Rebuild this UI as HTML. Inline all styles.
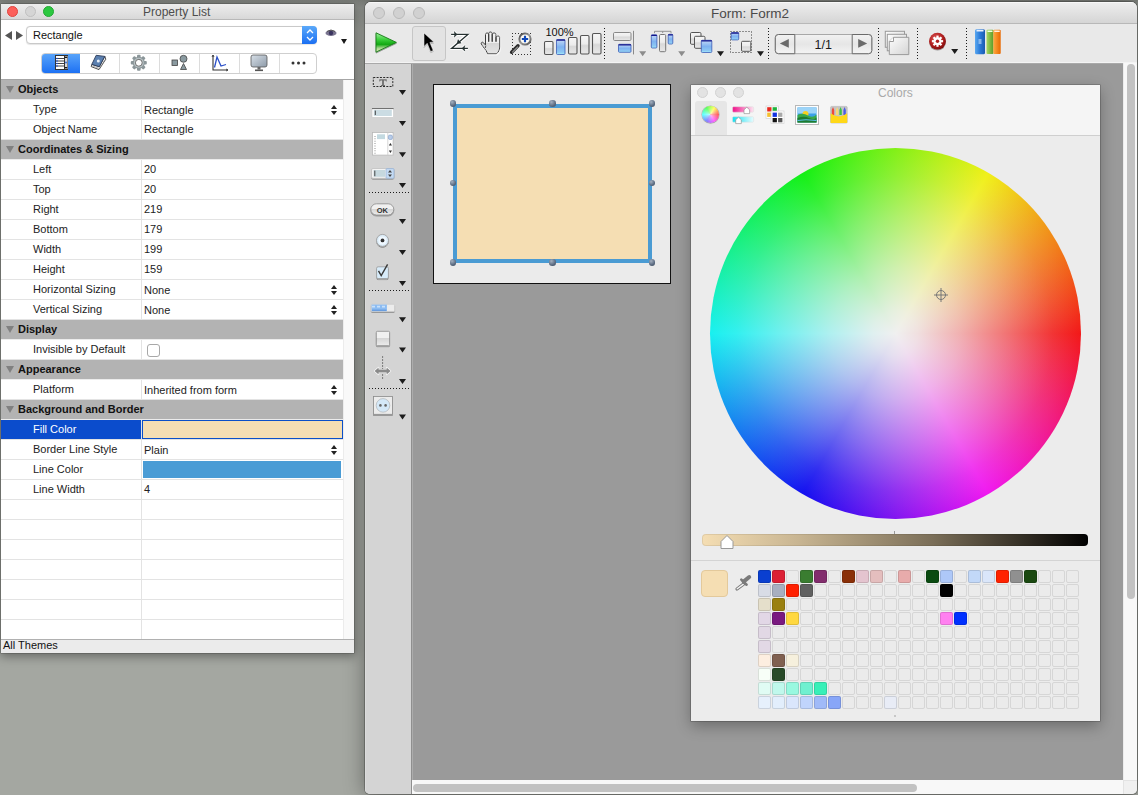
<!DOCTYPE html>
<html><head><meta charset="utf-8">
<style>
*{box-sizing:border-box;margin:0;padding:0}
html,body{width:1138px;height:795px;overflow:hidden}
body{position:relative;background:linear-gradient(#7e817c 0px,#959893 8px,#a4a7a1 30px);font-family:"Liberation Sans",sans-serif;color:#222}
.a{position:absolute}
svg{position:absolute;overflow:visible}
#pl{z-index:5;left:1px;top:4px;width:353px;height:649px;background:#fff;box-shadow:0 0 0 .5px rgba(0,0,0,.3),0 2px 10px 1px rgba(0,0,0,.4)}
.tl{position:absolute;width:12px;height:12px;border-radius:50%}
.ttl{position:absolute;font-size:12px;color:#4d4d4d;white-space:nowrap;line-height:14px}
.row{position:absolute;left:0;width:342px;height:20px;font-size:11px;color:#222}
.row .bl{position:absolute;left:0;top:19px;width:342px;height:1px;background:#e3e3e3}
.row .l{position:absolute;left:32px;top:3px;white-space:nowrap;line-height:13px}
.row .v{position:absolute;left:143px;top:3px;white-space:nowrap;line-height:13px}
.row .d{position:absolute;left:140px;top:0;width:1px;height:20px;background:#e3e3e3}
.row.sel{background:linear-gradient(#0b4ccc 0,#0b4ccc 19px,transparent 19px);color:#fff}
.hdr{position:absolute;left:0;width:342px;height:20px;background:#b3b3b3;border-bottom:1px solid #ececec;font-size:11px;font-weight:bold;color:#111}
.hdr .l{position:absolute;left:17px;top:3px;white-space:nowrap;line-height:13px}
.hdr .t{position:absolute;left:5px;top:6px;width:0;height:0;border-left:4.5px solid transparent;border-right:4.5px solid transparent;border-top:7px solid #808080}
.ud{right:6px;top:5px;width:6px;height:10px}
.seg{position:absolute;top:0;height:20px;width:40px;border-left:1px solid #dcdcdc}
.pt{position:absolute;width:0;height:0;border-left:3.5px solid transparent;border-right:3.5px solid transparent;border-top:5px solid #1a1a1a}
.dots{position:absolute;border-left:1px dotted #222}
.hdots{position:absolute;border-top:1px dotted #222}
.gc{position:absolute;width:13px;height:13px;border:1px solid #d6d6d6;border-radius:2px;background:#ebebeb}
.hd{position:absolute;width:6.4px;height:6.4px;border-radius:50%;background:radial-gradient(circle at 35% 30%,#a4b0c0,#5a6a80 60%,#3e4a5c)}
</style></head><body>

<!-- ============ Property List window ============ -->
<div id="pl" class="a">
  <div class="a" style="left:0;top:0;width:353px;height:16px;background:linear-gradient(#ededed,#d8d8d8);border-bottom:1px solid #b8b8b8"></div>
  <div class="tl" style="left:6px;top:2px;width:11px;height:11px;background:#fc605b;border:1px solid #e0443e"></div>
  <div class="tl" style="left:24px;top:2px;width:11px;height:11px;background:#d5d5d5;border:1px solid #c0c0c0"></div>
  <div class="tl" style="left:42px;top:2px;width:11px;height:11px;background:#2cc840;border:1px solid #22a834"></div>
  <div class="ttl" style="left:142px;top:1px">Property List</div>

  <!-- nav arrows -->
  <svg style="left:4px;top:27px" width="20" height="10"><path d="M0 4.5L7 0V9z" fill="#555"/><path d="M11 0L18 4.5L11 9z" fill="#555"/></svg>
  <!-- popup -->
  <div class="a" style="left:25px;top:22px;width:291px;height:18px;border:1px solid #c9c9c9;border-radius:4px;background:#fff;box-shadow:0 .5px 1px rgba(0,0,0,.1)"></div>
  <div class="a" style="left:32px;top:25px;font-size:11px;line-height:13px;color:#111">Rectangle</div>
  <div class="a" style="left:301px;top:22px;width:15px;height:18px;border-radius:0 4px 4px 0;background:linear-gradient(#5aa9fa,#1b6ff2)"></div>
  <svg style="left:305px;top:25px" width="8" height="12"><path d="M1 4L4 1L7 4M1 8L4 11L7 8" stroke="#fff" stroke-width="1.3" fill="none"/></svg>
  <!-- eye -->
  <svg style="left:324px;top:25px" width="22" height="16"><ellipse cx="6" cy="4" rx="5.5" ry="3" fill="#7a7590"/><ellipse cx="6" cy="4" rx="2.2" ry="2.2" fill="#3b3560"/><path d="M2 2.5Q6 -0.5 10 2.5" stroke="#555" fill="none"/></svg>
  <div class="pt" style="left:339.5px;top:35px"></div>

  <!-- segmented control -->
  <div class="a" style="left:40px;top:49px;width:276px;height:21px;border:1px solid #cfcfcf;border-radius:4px;background:#fff;overflow:hidden">
    <div class="a" style="left:-1px;top:-1px;width:39px;height:21px;background:linear-gradient(#5ba6fa,#1a6ef3)"></div>
    <div class="seg" style="left:76.5px"></div>
    <div class="seg" style="left:116.5px"></div>
    <div class="seg" style="left:156.5px"></div>
    <div class="seg" style="left:196.5px"></div>
    <div class="seg" style="left:236.5px"></div>
  </div>
  <!-- seg icons -->
  <svg style="left:53px;top:51px" width="16" height="16"><rect x="1.5" y="0.5" width="12" height="14" fill="#fff" stroke="#333"/><path d="M2 3.5H10M2 6H10M2 8.5H10M2 11H10" stroke="#444" stroke-width="1"/><rect x="10.5" y="1" width="3" height="13" fill="#d8d8d8"/><path d="M10.5 0.5V14.5" stroke="#333"/><path d="M12 1L13.5 3H10.5z M12 14L13.5 12H10.5z" fill="#111"/><circle cx="12" cy="7.5" r="1" fill="#3a6fd8"/><circle cx="3" cy="3.5" r=".8" fill="#1a4fd8"/><circle cx="3" cy="6" r=".8" fill="#1a4fd8"/><circle cx="3" cy="8.5" r=".8" fill="#1a4fd8"/><circle cx="3" cy="11" r=".8" fill="#1a4fd8"/></svg>
  <svg style="left:86px;top:48px" width="22" height="22"><path d="M4.8 12.4L4.2 14.6L12 17.6L18.8 7.2L17.8 4.4L12.3 14.7z" fill="#fff" stroke="#3a3a3a" stroke-width=".9" stroke-linejoin="round"/><path d="M5.6 14L12 16.2M13 15.5L18 7.6" stroke="#888" stroke-width=".6"/><path d="M9.2 3.3L17.8 4.4L12.3 14.7L4.8 12.4z" fill="#5b80b0" stroke="#2a3a58" stroke-width=".9" stroke-linejoin="round"/><circle cx="11.3" cy="9" r="1.5" fill="#e8f0fa"/></svg>
  <svg style="left:129.2px;top:50px" width="18" height="18"><g transform="translate(8.8 8.8)"><g fill="#8b9699"><rect x="-1.8" y="-8" width="3.6" height="16" rx="1"/><rect x="-1.8" y="-8" width="3.6" height="16" rx="1" transform="rotate(45)"/><rect x="-1.8" y="-8" width="3.6" height="16" rx="1" transform="rotate(90)"/><rect x="-1.8" y="-8" width="3.6" height="16" rx="1" transform="rotate(135)"/></g><circle r="6" fill="#8b9699"/><circle r="5" fill="#b8c2c4"/><circle r="3.4" fill="#fff" stroke="#555" stroke-width=".8"/></g></svg>
  <svg style="left:170px;top:50px" width="18" height="18"><rect x="1" y="6" width="5.5" height="5.5" fill="#8a9aa0" stroke="#444" stroke-width=".8"/><circle cx="12.5" cy="4.8" r="3.5" fill="#8a9aa0" stroke="#444" stroke-width=".8"/><path d="M9.5 15.5L12.5 9.5L15.5 15.5z" fill="#8a9aa0" stroke="#444" stroke-width=".8"/></svg>
  <svg style="left:210px;top:50px" width="18" height="18"><path d="M2 1V16H17" stroke="#333" stroke-width="1.1" fill="none"/><path d="M3.5 13.5L6 3L10 12L15 10.5" stroke="#2a4fc8" stroke-width="1.3" fill="none"/><path d="M1 3L2 1L3 3M15 15L17 16L15 17" stroke="#333" stroke-width=".8" fill="none"/></svg>
  <svg style="left:249px;top:50px" width="18" height="18"><rect x="1" y="1" width="16" height="12" rx="2" fill="url(#mon)" stroke="#555" stroke-width=".8"/><rect x="7.5" y="13" width="3" height="2.5" fill="#666"/><rect x="5" y="15.5" width="8" height="1.6" fill="#555"/><defs><linearGradient id="mon" x1="0" y1="0" x2="1" y2="1"><stop offset="0" stop-color="#d8e0e8"/><stop offset="1" stop-color="#8d9aa8"/></linearGradient></defs></svg>
  <svg style="left:289px;top:56px" width="18" height="6"><circle cx="3" cy="3" r="1.5" fill="#333"/><circle cx="8.5" cy="3" r="1.5" fill="#333"/><circle cx="14" cy="3" r="1.5" fill="#333"/></svg>

  <!-- list top line -->
  <div class="a" style="left:0;top:75px;width:353px;height:1px;background:#a6a6a6"></div>
  <!-- scroll gutter -->
  <div class="a" style="left:342px;top:76px;width:11px;height:559px;background:#f9f9f9;border-left:1px solid #ececec"></div>
<div class="hdr" style="top:76px"><div class="t"></div><div class="l">Objects</div></div>
<div class="row" style="top:96px"><div class="l">Type</div><div class="d"></div><div class="bl"></div><div class="v" style="top:4px">Rectangle</div><svg class="ud" viewBox="0 0 6 10"><path d="M3 0L6 4H0z M3 10L6 6H0z" fill="#222"/></svg></div>
<div class="row" style="top:116px"><div class="l">Object Name</div><div class="d"></div><div class="bl"></div><div class="v">Rectangle</div></div>
<div class="hdr" style="top:136px"><div class="t"></div><div class="l">Coordinates & Sizing</div></div>
<div class="row" style="top:156px"><div class="l">Left</div><div class="d"></div><div class="bl"></div><div class="v">20</div></div>
<div class="row" style="top:176px"><div class="l">Top</div><div class="d"></div><div class="bl"></div><div class="v">20</div></div>
<div class="row" style="top:196px"><div class="l">Right</div><div class="d"></div><div class="bl"></div><div class="v">219</div></div>
<div class="row" style="top:216px"><div class="l">Bottom</div><div class="d"></div><div class="bl"></div><div class="v">179</div></div>
<div class="row" style="top:236px"><div class="l">Width</div><div class="d"></div><div class="bl"></div><div class="v">199</div></div>
<div class="row" style="top:256px"><div class="l">Height</div><div class="d"></div><div class="bl"></div><div class="v">159</div></div>
<div class="row" style="top:276px"><div class="l">Horizontal Sizing</div><div class="d"></div><div class="bl"></div><div class="v" style="top:4px">None</div><svg class="ud" viewBox="0 0 6 10"><path d="M3 0L6 4H0z M3 10L6 6H0z" fill="#222"/></svg></div>
<div class="row" style="top:296px"><div class="l">Vertical Sizing</div><div class="d"></div><div class="bl"></div><div class="v" style="top:4px">None</div><svg class="ud" viewBox="0 0 6 10"><path d="M3 0L6 4H0z M3 10L6 6H0z" fill="#222"/></svg></div>
<div class="hdr" style="top:316px"><div class="t"></div><div class="l">Display</div></div>
<div class="row" style="top:336px"><div class="l">Invisible by Default</div><div class="d"></div><div class="bl"></div><div class="a" style="left:146px;top:4px;width:13px;height:13px;border:1px solid #a8a8a8;border-radius:3px;background:#fff"></div></div>
<div class="hdr" style="top:356px"><div class="t"></div><div class="l">Appearance</div></div>
<div class="row" style="top:376px"><div class="l">Platform</div><div class="d"></div><div class="bl"></div><div class="v" style="top:4px">Inherited from form</div><svg class="ud" viewBox="0 0 6 10"><path d="M3 0L6 4H0z M3 10L6 6H0z" fill="#222"/></svg></div>
<div class="hdr" style="top:396px"><div class="t"></div><div class="l">Background and Border</div></div>
<div class="row sel" style="top:416px"><div class="l">Fill Color</div><div class="d"></div><div class="bl"></div><div class="a" style="left:141px;top:0;width:201px;height:19px;border:1.5px solid #0b4fc8;background:#f5deb3"></div></div>
<div class="row" style="top:436px"><div class="l">Border Line Style</div><div class="d"></div><div class="bl"></div><div class="v" style="top:4px">Plain</div><svg class="ud" viewBox="0 0 6 10"><path d="M3 0L6 4H0z M3 10L6 6H0z" fill="#222"/></svg></div>
<div class="row" style="top:456px"><div class="l">Line Color</div><div class="d"></div><div class="bl"></div><div class="a" style="left:142px;top:1px;width:198px;height:17px;background:#4a9cd5"></div></div>
<div class="row" style="top:476px"><div class="l">Line Width</div><div class="d"></div><div class="bl"></div><div class="v">4</div></div>
<div class="row" style="top:496px"><div class="d"></div><div class="bl"></div></div>
<div class="row" style="top:516px"><div class="d"></div><div class="bl"></div></div>
<div class="row" style="top:536px"><div class="d"></div><div class="bl"></div></div>
<div class="row" style="top:556px"><div class="d"></div><div class="bl"></div></div>
<div class="row" style="top:576px"><div class="d"></div><div class="bl"></div></div>
<div class="row" style="top:596px"><div class="d"></div><div class="bl"></div></div>
<div class="row" style="top:616px"><div class="d"></div><div class="bl"></div></div>
  <!-- status bar -->
  <div class="a" style="left:0;top:635px;width:353px;height:14px;background:#ebebeb;border-top:1px solid #b0b0b0"></div>
  <div class="a" style="left:2px;top:635px;font-size:11px;line-height:13px;color:#111">All Themes</div>
</div>

<!-- ============ Form window ============ -->
<div class="a" style="left:365px;top:2px;width:772px;height:792px;background:#e9e9e9;border-radius:6px 6px 5px 5px;overflow:hidden;box-shadow:0 0 0 1px rgba(0,0,0,.22),0 0 20px 1px rgba(0,0,0,.36)">
  <!-- title bar -->
  <div class="a" style="left:0;top:0;width:773px;height:22px;background:linear-gradient(#eeeeee,#d5d5d5);border-bottom:1px solid #b8b8b8;box-shadow:inset 0 1px 0 #f8f8f8"></div>
  <div class="tl" style="left:8px;top:5px;background:#d1d1d1;border:1px solid #b9b9b9"></div>
  <div class="tl" style="left:28px;top:5px;background:#d1d1d1;border:1px solid #b9b9b9"></div>
  <div class="tl" style="left:48px;top:5px;background:#d1d1d1;border:1px solid #b9b9b9"></div>
  <div class="ttl" style="left:346px;top:4px;width:78px;text-align:center;font-size:13.5px;line-height:16px;color:#4a4a4a">Form: Form2</div>
  <!-- toolbar -->
  <div class="a" style="left:0;top:22px;width:773px;height:40px;background:#e9e9e9;border-bottom:1px solid #a9a9a9;box-shadow:inset 0 -1px 0 #f3f3f3"></div>
  <svg style="left:0;top:0" width="773" height="63"><defs>
<linearGradient id="gG" x1="0" y1="0" x2="0" y2="1"><stop offset="0" stop-color="#f6f6f6"/><stop offset=".45" stop-color="#ececec"/><stop offset=".55" stop-color="#d8d8d8"/><stop offset="1" stop-color="#e8e8e8"/></linearGradient>
<linearGradient id="gB" x1="0" y1="0" x2="0" y2="1"><stop offset="0" stop-color="#c4daf6"/><stop offset=".5" stop-color="#7fb2f0"/><stop offset=".85" stop-color="#8cc8f4"/><stop offset="1" stop-color="#a8f0fa"/></linearGradient>
<linearGradient id="gPlay" x1="0" y1="0" x2="0" y2="1"><stop offset="0" stop-color="#9ff09f"/><stop offset=".35" stop-color="#3ccf3c"/><stop offset=".6" stop-color="#12a812"/><stop offset=".8" stop-color="#a8d890"/><stop offset="1" stop-color="#f4f0c0"/></linearGradient>
<linearGradient id="gPage" x1="0" y1="0" x2="1" y2="1"><stop offset="0" stop-color="#fdfdfd"/><stop offset="1" stop-color="#d4d4d4"/></linearGradient>
<radialGradient id="gGear" cx=".4" cy=".35" r=".7"><stop offset="0" stop-color="#e25a5a"/><stop offset=".6" stop-color="#b02020"/><stop offset="1" stop-color="#7a0c0c"/></radialGradient>
<linearGradient id="gBlue" x1="0" y1="0" x2="1" y2="0"><stop offset="0" stop-color="#5aa8f0"/><stop offset=".5" stop-color="#2a7ad8"/><stop offset="1" stop-color="#1a5ab0"/></linearGradient>
<linearGradient id="gGreen" x1="0" y1="0" x2="1" y2="0"><stop offset="0" stop-color="#a8d860"/><stop offset="1" stop-color="#5a9a28"/></linearGradient>
<linearGradient id="gOr" x1="0" y1="0" x2="1" y2="0"><stop offset="0" stop-color="#ffaa40"/><stop offset="1" stop-color="#e86800"/></linearGradient>
<linearGradient id="gPC" x1="0" y1="0" x2="0" y2="1"><stop offset="0" stop-color="#f2f2f2"/><stop offset=".5" stop-color="#e6e6e6"/><stop offset="1" stop-color="#f4f4f4"/></linearGradient>
<linearGradient id="gPB" x1="0" y1="0" x2="0" y2="1"><stop offset="0" stop-color="#f0f0f0"/><stop offset=".5" stop-color="#f0f0f0"/><stop offset=".5" stop-color="#d6d6d6"/><stop offset="1" stop-color="#ececec"/></linearGradient>
<linearGradient id="gHand" x1="0" y1="0" x2="0" y2="1"><stop offset="0" stop-color="#f2f2f2"/><stop offset=".5" stop-color="#eeeeee"/><stop offset=".52" stop-color="#d6d6d6"/><stop offset="1" stop-color="#e4e4e4"/></linearGradient>
<linearGradient id="gRing" x1="0" y1="0" x2="1" y2="1"><stop offset="0" stop-color="#444"/><stop offset=".5" stop-color="#999"/><stop offset="1" stop-color="#555"/></linearGradient>
<filter id="sh" x="-20%" y="-20%" width="140%" height="140%"><feDropShadow dx="0" dy="1" stdDeviation=".4" flood-color="#000" flood-opacity=".35"/></filter>
<filter id="shw" x="-20%" y="-20%" width="140%" height="140%"><feDropShadow dx=".5" dy="1" stdDeviation=".3" flood-color="#fff" flood-opacity="1"/></filter>
</defs><path d="M11 30.8L31.4 40.4L11 50.1z" fill="url(#gPlay)" stroke="#157a15" stroke-width=".9" stroke-linejoin="round" filter="url(#sh)"/><rect x="47.5" y="24.5" width="33" height="34" rx="2.5" fill="#e3e3e3" stroke="#c6c6c6"/><path d="M59 31L59 44.5L62.2 41.3L65.6 49.6L68.2 48.6L64.9 40.4L68.8 40z" fill="#000" stroke="#fff" stroke-width=".5" filter="url(#sh)"/><path d="M86.1 32.4H102.9L86.6 46.4H102.9" stroke="#fff" stroke-width="3.4" stroke-linejoin="round" fill="none"/><path d="M92 32.4L89.2 29.6L89.9 32.4L89.2 35.2z M97.1 46.4L99.9 43.6L99.2 46.4L99.9 49.2z M92.1 41.6L93.1 37.6L94.4 39.6L96.2 41.1z" fill="#fff" stroke="#fff" stroke-width="2.2" stroke-linejoin="round"/><path d="M86.1 32.4H102.9L86.6 46.4H102.9" stroke="#253030" stroke-width="1.3" fill="none"/><path d="M92 32.4L89.2 29.6L89.9 32.4L89.2 35.2z M97.1 46.4L99.9 43.6L99.2 46.4L99.9 49.2z M92.1 41.6L93.1 37.6L94.4 39.6L96.2 41.1z" fill="#253030" stroke="#253030" stroke-width=".5"/><path d="M121 48.5C119 46 117 43.5 116.2 41.8C115.8 40.5 117.6 39.5 118.6 40.8L120.5 43V32.5C120.5 30.5 123.7 30.5 123.7 32.5V39.7V31.5C123.7 29.5 127.2 29.5 127.2 31.5V39.7V32.5C127.2 30.5 131 30.5 131 32.5V39.7V35.5C131 33.5 134.7 33.5 134.7 35.5V45C134.7 48 133.5 50 131.5 51.8H122.5C122 50.5 121.6 49.5 121 48.5z" fill="url(#gHand)" stroke="#3a3a3a" stroke-width="1" stroke-linejoin="round" filter="url(#shw)"/><path d="M120.8 43.5L120.3 46" stroke="#555" stroke-width="1"/><g fill="#333"><rect x="147" y="31" width="1" height="1"/><rect x="147" y="52" width="1" height="1"/><rect x="150" y="31" width="1" height="1"/><rect x="150" y="52" width="1" height="1"/><rect x="153" y="31" width="1" height="1"/><rect x="153" y="52" width="1" height="1"/><rect x="156" y="31" width="1" height="1"/><rect x="156" y="52" width="1" height="1"/><rect x="159" y="31" width="1" height="1"/><rect x="159" y="52" width="1" height="1"/><rect x="162" y="31" width="1" height="1"/><rect x="162" y="52" width="1" height="1"/><rect x="165" y="31" width="1" height="1"/><rect x="165" y="52" width="1" height="1"/><rect x="147" y="34" width="1" height="1"/><rect x="165" y="34" width="1" height="1"/><rect x="147" y="37" width="1" height="1"/><rect x="165" y="37" width="1" height="1"/><rect x="147" y="40" width="1" height="1"/><rect x="165" y="40" width="1" height="1"/><rect x="147" y="43" width="1" height="1"/><rect x="165" y="43" width="1" height="1"/><rect x="147" y="46" width="1" height="1"/><rect x="165" y="46" width="1" height="1"/><rect x="147" y="49" width="1" height="1"/><rect x="165" y="49" width="1" height="1"/></g><path d="M146.6 50.2L153 43.8" stroke="#2a2a2a" stroke-width="3.4" stroke-linecap="round"/><path d="M147.6 50L152.6 45" stroke="#8a8a8a" stroke-width="1.2" stroke-linecap="round"/><circle cx="160" cy="37" r="5.6" fill="#fffdf6" stroke="url(#gRing)" stroke-width="2"/><path d="M160 33.8V40.2M156.8 37H163.2" stroke="#1048b8" stroke-width="2.2"/><text x="180.5" y="34.2" font-family="Liberation Sans" font-size="11" fill="#111">100%</text><rect x="179.5" y="39.5" width="8.5" height="13" rx="1.2" fill="url(#gG)" stroke="#555" stroke-width="1.1"/><rect x="203.5" y="35.5" width="8.5" height="16.5" rx="1.2" fill="url(#gG)" stroke="#555" stroke-width="1.1"/><rect x="215.5" y="33.5" width="8.5" height="18.5" rx="1.2" fill="url(#gG)" stroke="#555" stroke-width="1.1"/><rect x="227.5" y="31.5" width="8.5" height="20.5" rx="1.2" fill="url(#gG)" stroke="#555" stroke-width="1.1"/><rect x="191.5" y="37.5" width="8.5" height="15" rx="1" fill="url(#gB)" stroke="#3a5ab8" stroke-width=".8"/><path d="M191.5 38.1H200.0" stroke="#14148a" stroke-width="1.3"/><path d="M239.5 26V57" stroke="#1a1a1a" stroke-width="1" stroke-dasharray="1 2"/><rect x="248.5" y="30.5" width="17.5" height="8" rx="1.2" fill="url(#gG)" stroke="#888" stroke-width="1"/><rect x="253.5" y="42.3" width="12.5" height="8" rx="1" fill="url(#gB)" stroke="#3a5ab8" stroke-width=".8"/><path d="M253.5 42.9H266.0" stroke="#14148a" stroke-width="1.3"/><path d="M268.5 28.8V52.4" stroke="#8a8a8a" stroke-width="1"/><path d="M274.2 49.2H281.2L277.7 54.2z" fill="#8c8c8c"/><path d="M289.5 31.2V29.3H306V31.2M297.7 29.3V31" stroke="#8a8a8a" stroke-width=".9" fill="none"/><rect x="286.3" y="32.8" width="5.6" height="13.2" rx="1" fill="url(#gB)" stroke="#3a5ab8" stroke-width=".8"/><path d="M286.3 33.4H291.90000000000003" stroke="#14148a" stroke-width="1.3"/><rect x="294.5" y="32.5" width="6.2" height="17.2" rx="1.2" fill="url(#gG)" stroke="#777" stroke-width="1"/><rect x="303.2" y="32.3" width="4.6" height="9.7" rx="1" fill="url(#gB)" stroke="#3a5ab8" stroke-width=".8"/><path d="M303.2 32.9H307.8" stroke="#14148a" stroke-width="1.3"/><path d="M313.2 49.2H320.2L316.7 54.2z" fill="#8c8c8c"/><rect x="325.5" y="30.5" width="10.5" height="11.8" rx="1.2" fill="url(#gG)" stroke="#555" stroke-width="1"/><rect x="329.5" y="34.3" width="10.5" height="12" rx="1.2" fill="url(#gG)" stroke="#555" stroke-width="1"/><rect x="336.3" y="38.3" width="10.5" height="12.2" rx="1" fill="url(#gB)" stroke="#3a5ab8" stroke-width=".8"/><path d="M336.3 38.9H346.8" stroke="#14148a" stroke-width="1.3"/><path d="M352 49.2H359L355.5 54.2z" fill="#1c1c1c"/><rect x="365.5" y="29.5" width="21" height="21" fill="none" stroke="#333" stroke-dasharray="1 2"/><rect x="366.2" y="30.5" width="7.5" height="7.4" rx="1" fill="url(#gB)" stroke="#3a5ab8" stroke-width=".8"/><path d="M366.2 31.1H373.7" stroke="#14148a" stroke-width="1.3"/><rect x="376.5" y="39.3" width="9.3" height="10" rx="1.2" fill="url(#gG)" stroke="#555" stroke-width="1"/><path d="M392 49.2H399L395.5 54.2z" fill="#1c1c1c"/><path d="M403.5 26V57" stroke="#1a1a1a" stroke-width="1" stroke-dasharray="1 2"/><rect x="410.3" y="32.5" width="96.5" height="19.2" rx="3.2" fill="url(#gPC)" stroke="#a8a8a8"/><path d="M429.8 32.5H413.5Q410.3 32.5 410.3 35.7V48.5Q410.3 51.7 413.5 51.7H429.8z" fill="url(#gPC)" stroke="#6a6a6a"/><path d="M487.2 32.5H503.5Q506.8 32.5 506.8 35.7V48.5Q506.8 51.7 503.5 51.7H487.2z" fill="url(#gPC)" stroke="#6a6a6a"/><path d="M414.8 41.4L423.8 37V45.8z" fill="#6a6a6a"/><path d="M493.2 37L502.2 41.4L493.2 45.8z" fill="#6a6a6a"/><text x="458.2" y="47.2" text-anchor="middle" font-family="Liberation Sans" font-size="12.5" fill="#1a1a1a">1/1</text><path d="M513.5 26V57" stroke="#1a1a1a" stroke-width="1" stroke-dasharray="1 2"/><rect x="520.3" y="29.3" width="19.2" height="16" fill="url(#gPage)" stroke="#9a9a9a"/><rect x="522.3" y="32.3" width="19.2" height="16.5" fill="url(#gPage)" stroke="#9a9a9a"/><path d="M528.5 35.3H543.8V52.6H524.3V39.5z" fill="url(#gPage)" stroke="#9a9a9a"/><path d="M524.3 39.5H528.5V35.3" fill="#fff" stroke="#9a9a9a"/><path d="M552.5 26V57" stroke="#1a1a1a" stroke-width="1" stroke-dasharray="1 2"/><g transform="translate(572.5 39.2)" filter="url(#sh)"><circle r="8.4" fill="url(#gGear)"/><g fill="#fff"><rect x="-1.1" y="-5.6" width="2.2" height="3" transform="rotate(0)"/><rect x="-1.1" y="-5.6" width="2.2" height="3" transform="rotate(45)"/><rect x="-1.1" y="-5.6" width="2.2" height="3" transform="rotate(90)"/><rect x="-1.1" y="-5.6" width="2.2" height="3" transform="rotate(135)"/><rect x="-1.1" y="-5.6" width="2.2" height="3" transform="rotate(180)"/><rect x="-1.1" y="-5.6" width="2.2" height="3" transform="rotate(225)"/><rect x="-1.1" y="-5.6" width="2.2" height="3" transform="rotate(270)"/><rect x="-1.1" y="-5.6" width="2.2" height="3" transform="rotate(315)"/><circle r="3.9"/></g><circle r="1.7" fill="#b02020"/></g><path d="M586.2 47H593.2L589.7 52z" fill="#1c1c1c"/><path d="M601.5 26V57" stroke="#1a1a1a" stroke-width="1" stroke-dasharray="1 2"/><rect x="610" y="27.2" width="10" height="25" rx="1.5" fill="url(#gBlue)"/><path d="M611.5 28.6H618.5" stroke="#e8f0ff" stroke-width="1.6"/><rect x="613.5" y="37" width="3" height="5" fill="#9cc4f0" opacity=".8"/><rect x="621.5" y="27.8" width="7" height="24.2" rx="1" fill="url(#gGreen)"/><path d="M622.5 29.2H627.5" stroke="#f0ffe0" stroke-width="1.6"/><rect x="628.3" y="27.8" width="7.4" height="24.2" rx="1" fill="url(#gOr)"/><path d="M629.3 29.2H634.7" stroke="#fff0e0" stroke-width="1.6"/></svg>
  <!-- palette -->
  <div class="a" style="left:0;top:62px;width:48px;height:731px;background:#d4d4d4;border-right:1px solid #acacac;box-shadow:inset -1px 0 0 #8f8f8f,inset 1px 0 0 #dcdcdc"></div>
  <svg style="left:0;top:0" width="50" height="430"><path d="M34 88H41L37.5 93z" fill="#1c1c1c"/><path d="M34 119H41L37.5 124z" fill="#1c1c1c"/><path d="M34 150.2H41L37.5 155.2z" fill="#1c1c1c"/><path d="M34 181H41L37.5 186z" fill="#1c1c1c"/><path d="M34 217H41L37.5 222z" fill="#1c1c1c"/><path d="M34 248H41L37.5 253z" fill="#1c1c1c"/><path d="M34 279H41L37.5 284z" fill="#1c1c1c"/><path d="M34 315.3H41L37.5 320.3z" fill="#1c1c1c"/><path d="M34 345.5H41L37.5 350.5z" fill="#1c1c1c"/><path d="M34 377.1H41L37.5 382.1z" fill="#1c1c1c"/><path d="M34 412.6H41L37.5 417.6z" fill="#1c1c1c"/><path d="M4 190.5H45" stroke="#1a1a1a" stroke-width="1" stroke-dasharray="1 2"/><path d="M4 288.5H45" stroke="#1a1a1a" stroke-width="1" stroke-dasharray="1 2"/><path d="M4 386.5H45" stroke="#1a1a1a" stroke-width="1" stroke-dasharray="1 2"/><rect x="8.3" y="75.5" width="19.5" height="9" fill="none" stroke="#2a2a2a" stroke-dasharray="2 1.3"/><path d="M14.3 77.3H21.7V79.6H21L20.4 78.4H18.9V83H20V84H16V83H17.1V78.4H15.6L15 79.6H14.3z" fill="#6e6e6e"/><rect x="7" y="106.2" width="21.6" height="9.2" fill="#fff" stroke="#c8c8c8" stroke-width=".6"/><path d="M7 106.6H28.6" stroke="#666" stroke-width="1"/><rect x="8.8" y="107.8" width="18" height="6.2" fill="#cbdce3"/><path d="M10.3 108.6V113" stroke="#333" stroke-width=".9"/><rect x="7.5" y="130.5" width="20.6" height="22.6" fill="#fff" stroke="#b8b8b8" stroke-width=".8"/><rect x="12" y="132.3" width="8" height="4.8" fill="#c3d9e0"/><path d="M22.8 130.5V153" stroke="#ccc" stroke-width=".8"/><rect x="23.4" y="133" width="4" height="4.5" rx="1.5" fill="#b8cce8" stroke="#7a98c8" stroke-width=".6"/><path d="M25.4 141L27 143.5H23.8z M25.4 151L27 148.5H23.8z" fill="#333"/><path d="M10 134V153" stroke="#555" stroke-width=".8" stroke-dasharray=".8 1.6"/><rect x="6.5" y="166.5" width="22.5" height="9.8" rx="1.5" fill="#f4f4f4" stroke="#bbb" stroke-width=".7" filter="url(#sh)"/><rect x="8.6" y="168" width="11.6" height="6.8" fill="#c6d8de"/><path d="M9.8 168.6V174.2" stroke="#333" stroke-width=".9"/><rect x="21" y="166.6" width="8" height="9.7" rx="1" fill="#c4daf2" stroke="#8aa8d0" stroke-width=".6"/><path d="M25 168L27 170.5H23z M25 175L27 172.5H23z" fill="#444"/><rect x="5.8" y="201.8" width="23" height="11.2" rx="5.6" fill="url(#gPB)" stroke="#8a8a8a" stroke-width=".8" filter="url(#sh)"/><text x="17.4" y="210.6" text-anchor="middle" font-family="Liberation Sans" font-weight="bold" font-size="7.5" fill="#333">OK</text><circle cx="17.5" cy="238.4" r="6" fill="#dcecf8" stroke="#999" stroke-width=".8" filter="url(#sh)"/><circle cx="17.5" cy="238.4" r="4" fill="#f0f8ff"/><circle cx="17.5" cy="238.4" r="1.9" fill="#333"/><rect x="11.6" y="264.8" width="11.8" height="11.8" rx="1.5" fill="#d8ecfa" stroke="#999" stroke-width=".8" filter="url(#sh)"/><path d="M13.5 268.8L16.2 273.6L22.6 262.4" stroke="#3a3a3a" stroke-width="1.4" fill="none"/><rect x="6.2" y="302.2" width="23.4" height="7.2" rx="1" fill="#ececec" stroke="#c8c8c8" stroke-width=".7" filter="url(#sh)"/><rect x="6.6" y="302.6" width="15.3" height="6.6" fill="#8cbcf2"/><path d="M7 304.6H21.5" stroke="#c8e0fa" stroke-width="1.6" stroke-dasharray="3 2"/><path d="M7 308.2H21.5" stroke="#5a90d8" stroke-width="1"/><rect x="11.3" y="329.3" width="13.3" height="14.4" rx="1" fill="url(#gPB)" stroke="#8a8a8a" stroke-width=".8" filter="url(#sh)"/><path d="M17.6 354.5V378.5" stroke="#222" stroke-dasharray="1 2"/><path d="M9.6 369L13.6 365.4V367.6H21.6V365.4L25.6 369L21.6 372.6V370.4H13.6V372.6z" fill="#8a8a8a" stroke="#fff" stroke-width="1.2" stroke-linejoin="round" paint-order="stroke"/><rect x="8.5" y="394.5" width="19" height="17.8" fill="#ececec" stroke="#8a8a8a" stroke-width=".8" filter="url(#sh)"/><circle cx="18" cy="403.4" r="6.8" fill="#d4e8f8" stroke="#aaa" stroke-width=".6"/><circle cx="15.4" cy="403.4" r="1.3" fill="#666"/><circle cx="20.6" cy="403.4" r="1.3" fill="#666"/></svg>
  <!-- canvas -->
  <div class="a" style="left:48px;top:62px;width:710px;height:716px;background:#9a9a9a"></div>
  <!-- form -->
  <div class="a" style="left:68px;top:82px;width:238px;height:200px;background:#ebebeb;border:1px solid #111"></div>
  <div class="a" style="left:88px;top:102px;width:199px;height:159px;background:#f5deb3;border:4px solid #4a9bd3"></div>
  <div class="hd" style="left:84.8px;top:98.3px"></div><div class="hd" style="left:84.8px;top:177.8px"></div><div class="hd" style="left:84.8px;top:257.3px"></div><div class="hd" style="left:184.3px;top:98.3px"></div><div class="hd" style="left:184.3px;top:257.3px"></div><div class="hd" style="left:283.8px;top:98.3px"></div><div class="hd" style="left:283.8px;top:177.8px"></div><div class="hd" style="left:283.8px;top:257.3px"></div>
  <!-- v scrollbar -->
  <div class="a" style="left:758px;top:61px;width:14px;height:717px;background:#f8f8f8;border-left:1px solid #ececec"></div>
  <div class="a" style="left:762px;top:62px;width:8px;height:535px;border-radius:4px;background:#c2c2c2"></div>
  <!-- h scrollbar -->
  <div class="a" style="left:47px;top:778px;width:711px;height:14px;background:#f8f8f8"></div>
  <div class="a" style="left:48px;top:782px;width:504px;height:8px;border-radius:4px;background:#c2c2c2"></div>
  <div class="a" style="left:758px;top:778px;width:15px;height:14px;background:#f0f0f0;border-left:1px solid #e3e3e3;border-top:1px solid #e3e3e3"></div>
  
</div>

<!-- ============ Colors panel ============ -->
<div class="a" style="left:691px;top:85px;width:409px;height:636px;background:#ececec;box-shadow:0 0 0 .5px rgba(0,0,0,.35),0 5px 14px rgba(0,0,0,.3)">
  <div class="a" style="left:0;top:0;width:409px;height:51px;background:#f5f5f5;border-bottom:1px solid #cfcfcf"></div>
  <div class="a" style="left:4px;top:16px;width:32px;height:34px;border-radius:3px 3px 0 0;background:#e6e6e6"></div>
  <div class="tl" style="left:6px;top:2px;width:11px;height:11px;background:#e3e3e3;border:1px solid #d2d2d2"></div>
  <div class="tl" style="left:24px;top:2px;width:11px;height:11px;background:#e3e3e3;border:1px solid #d2d2d2"></div>
  <div class="tl" style="left:42px;top:2px;width:11px;height:11px;background:#e3e3e3;border:1px solid #d2d2d2"></div>
  <div class="ttl" style="left:187px;top:1px;font-size:12px;color:#a9a9a9">Colors</div>
  <div class="a" style="left:10.7px;top:20.6px;width:17px;height:17px;border-radius:50%;background:conic-gradient(from 90deg,#f55,#f5f,#77f,#5ff,#5f5,#ff5,#f55);box-shadow:0 0 0 .6px rgba(0,0,0,.2),0 .5px 1px rgba(0,0,0,.25)"></div><div class="a" style="left:10.7px;top:20.6px;width:17px;height:17px;border-radius:50%;background:radial-gradient(closest-side,rgba(255,255,255,.6),rgba(255,255,255,0))"></div><svg style="left:40px;top:19px" width="25" height="22"><rect x="1.6" y="2.7" width="21" height="5.5" rx="1" fill="url(#mg)" stroke="#ddd" stroke-width=".5"/><rect x="1.6" y="12.7" width="21" height="5.5" rx="1" fill="url(#cy)" stroke="#ddd" stroke-width=".5"/><path d="M15.8 3.2L18.6 5.8V9.6H13V5.8z" fill="#fff" stroke="#888" stroke-width=".6"/><path d="M7.5 13.2L10.3 15.8V19.6H4.7V15.8z" fill="#fff" stroke="#888" stroke-width=".6"/><defs><linearGradient id="mg"><stop offset="0" stop-color="#f0108a"/><stop offset="1" stop-color="#fde6f2"/></linearGradient><linearGradient id="cy"><stop offset="0" stop-color="#10e0f0"/><stop offset="1" stop-color="#e8fcff"/></linearGradient></defs></svg><svg style="left:74px;top:20px" width="20" height="20"><rect x="1" y="1" width="12.5" height="12.5" fill="#fff" stroke="#ccc" stroke-width=".6"/><rect x="2.2" y="2.2" width="4.3" height="4.3" fill="#e8281e"/><rect x="7.6" y="2.2" width="4.3" height="4.3" fill="#1eb43c"/><rect x="2.2" y="7.6" width="4.3" height="4.3" fill="#f4c030"/><rect x="6" y="6" width="13" height="12.6" fill="#fff" stroke="#ccc" stroke-width=".6"/><rect x="7.6" y="7.6" width="4.3" height="4.3" fill="#1232e0"/><rect x="13.1" y="7.6" width="4.3" height="4.3" fill="#a8a8a8"/><rect x="7.6" y="13" width="4.3" height="4.3" fill="#111"/><rect x="13.1" y="13" width="4.3" height="4.3" fill="#555"/></svg><svg style="left:104px;top:20px" width="24" height="20"><rect x=".5" y=".5" width="23" height="19" fill="#fff" stroke="#b8b8b8"/><rect x="2.5" y="2.5" width="19" height="15" fill="#3aa0e8"/><rect x="2.5" y="2.5" width="19" height="6" fill="#9cd4f8"/><circle cx="10.5" cy="9" r="3" fill="#f8d020"/><path d="M2.5 10Q8 7.5 13 10.5T21.5 9.5V17.5H2.5z" fill="#38a848"/><path d="M2.5 13Q9 10.5 14 13T21.5 12.5V17.5H2.5z" fill="#1e7a30"/><path d="M2.5 15.5Q10 14 21.5 15.5" stroke="#5cc0f0" stroke-width="1" fill="none"/></svg><svg style="left:139px;top:20px" width="19" height="20"><rect x=".6" y="1.4" width="16.6" height="16.6" rx="1" fill="#c4c4c4" stroke="#b4b4b4" stroke-width=".6"/><path d="M1.8 10V5L3 2L4.2 5V10z" fill="#f04a3a"/><path d="M6 10V5L7.2 2L8.4 5V10z" fill="#f6d878"/><path d="M9.4 10V5L10.6 2L11.8 5V10z" fill="#3cc04a"/><path d="M13.4 10V5L14.6 2L15.8 5V10z" fill="#4a5ae8"/><path d="M.6 8.2L4.5 10.6L8.9 11.6L13.2 10.6L17.2 8.2V18H.6z" fill="#ffd818"/></svg>
  <!-- wheel -->
  <div class="a" style="left:19px;top:63px;width:371px;height:371px;border-radius:50%;background:conic-gradient(from 90deg,#f21818,#f018f0,#1410f0,#18f0f0,#14f014,#f0f018,#f21818)"></div>
  <div class="a" style="left:19px;top:63px;width:371px;height:371px;border-radius:50%;background:radial-gradient(closest-side,#f0f0f0 0%,rgba(240,240,240,.92) 12%,rgba(240,240,240,.7) 35%,rgba(240,240,240,.4) 62%,rgba(240,240,240,.13) 85%,rgba(240,240,240,0) 100%)"></div>
  <svg style="left:243px;top:203px" width="14" height="14"><circle cx="7" cy="7" r="4.5" stroke="#777" stroke-width="1" fill="none"/><path d="M7 0V14M0 7H14" stroke="#777" stroke-width="1"/></svg>
  <!-- brightness slider -->
  <div class="a" style="left:11px;top:449px;width:386px;height:12px;border-radius:4px;background:linear-gradient(90deg,#f5deb3 0%,#c8b592 25%,#7a6e58 60%,#000 100%);box-shadow:inset 0 0 0 1px rgba(0,0,0,.08)"></div>
  <div class="a" style="left:203px;top:446px;width:1px;height:3px;background:#999"></div>
  <svg style="left:29px;top:450px" width="14" height="15"><path d="M7 0.5L13 6.5V13.5H1V6.5z" fill="#fff" stroke="#999" stroke-width="1" stroke-linejoin="round"/></svg>
  <div class="a" style="left:0;top:475px;width:409px;height:1px;background:#d4d4d4"></div>
  <!-- swatch -->
  <div class="a" style="left:10px;top:485px;width:27px;height:27px;border-radius:4px;background:#f5deb3;border:1px solid #e3c99b"></div>
  <svg style="left:44px;top:489px" width="17" height="17"><path d="M8.8 9.9L2 15" stroke="#7a7a7a" stroke-width="3.2" stroke-linecap="round"/><path d="M8.2 10.4L2.2 14.8" stroke="#f4f4f4" stroke-width="1.4" stroke-linecap="round"/><path d="M6.3 5.6L11.6 10.7" stroke="#7a7a7a" stroke-width="2.6" stroke-linecap="round"/><path d="M8.6 7.6L14.2 3" stroke="#7a7a7a" stroke-width="4" stroke-linecap="round"/></svg>
  <div class="a" style="left:67px;top:485px"><div class="gc" style="left:0px;top:0px;background:#0a3fd0;border-color:rgba(0,0,0,.12)"></div><div class="gc" style="left:14px;top:0px;background:#dc2035;border-color:rgba(0,0,0,.12)"></div><div class="gc" style="left:28px;top:0px"></div><div class="gc" style="left:42px;top:0px;background:#3a7d30;border-color:rgba(0,0,0,.12)"></div><div class="gc" style="left:56px;top:0px;background:#822d6d;border-color:rgba(0,0,0,.12)"></div><div class="gc" style="left:70px;top:0px"></div><div class="gc" style="left:84px;top:0px;background:#8a3008;border-color:rgba(0,0,0,.12)"></div><div class="gc" style="left:98px;top:0px;background:#e4c4cf;border-color:rgba(0,0,0,.12)"></div><div class="gc" style="left:112px;top:0px;background:#e4bebe;border-color:rgba(0,0,0,.12)"></div><div class="gc" style="left:126px;top:0px"></div><div class="gc" style="left:140px;top:0px;background:#e8abab;border-color:rgba(0,0,0,.12)"></div><div class="gc" style="left:154px;top:0px"></div><div class="gc" style="left:168px;top:0px;background:#0a4a10;border-color:rgba(0,0,0,.12)"></div><div class="gc" style="left:182px;top:0px;background:#aec8f8;border-color:rgba(0,0,0,.12)"></div><div class="gc" style="left:196px;top:0px"></div><div class="gc" style="left:210px;top:0px;background:#c2d8f8;border-color:rgba(0,0,0,.12)"></div><div class="gc" style="left:224px;top:0px;background:#dae6fa;border-color:rgba(0,0,0,.12)"></div><div class="gc" style="left:238px;top:0px;background:#ff2200;border-color:rgba(0,0,0,.12)"></div><div class="gc" style="left:252px;top:0px;background:#909090;border-color:rgba(0,0,0,.12)"></div><div class="gc" style="left:266px;top:0px;background:#1a4810;border-color:rgba(0,0,0,.12)"></div><div class="gc" style="left:280px;top:0px"></div><div class="gc" style="left:294px;top:0px"></div><div class="gc" style="left:308px;top:0px"></div><div class="gc" style="left:0px;top:14px;background:#d8dce6;border-color:rgba(0,0,0,.12)"></div><div class="gc" style="left:14px;top:14px;background:#a8afc0;border-color:rgba(0,0,0,.12)"></div><div class="gc" style="left:28px;top:14px;background:#ff2000;border-color:rgba(0,0,0,.12)"></div><div class="gc" style="left:42px;top:14px;background:#606060;border-color:rgba(0,0,0,.12)"></div><div class="gc" style="left:56px;top:14px"></div><div class="gc" style="left:70px;top:14px"></div><div class="gc" style="left:84px;top:14px"></div><div class="gc" style="left:98px;top:14px"></div><div class="gc" style="left:112px;top:14px"></div><div class="gc" style="left:126px;top:14px"></div><div class="gc" style="left:140px;top:14px"></div><div class="gc" style="left:154px;top:14px"></div><div class="gc" style="left:168px;top:14px"></div><div class="gc" style="left:182px;top:14px;background:#000000;border-color:rgba(0,0,0,.12)"></div><div class="gc" style="left:196px;top:14px"></div><div class="gc" style="left:210px;top:14px"></div><div class="gc" style="left:224px;top:14px"></div><div class="gc" style="left:238px;top:14px"></div><div class="gc" style="left:252px;top:14px"></div><div class="gc" style="left:266px;top:14px"></div><div class="gc" style="left:280px;top:14px"></div><div class="gc" style="left:294px;top:14px"></div><div class="gc" style="left:308px;top:14px"></div><div class="gc" style="left:0px;top:28px;background:#e5dfcb;border-color:rgba(0,0,0,.12)"></div><div class="gc" style="left:14px;top:28px;background:#9a8010;border-color:rgba(0,0,0,.12)"></div><div class="gc" style="left:28px;top:28px"></div><div class="gc" style="left:42px;top:28px"></div><div class="gc" style="left:56px;top:28px"></div><div class="gc" style="left:70px;top:28px"></div><div class="gc" style="left:84px;top:28px"></div><div class="gc" style="left:98px;top:28px"></div><div class="gc" style="left:112px;top:28px"></div><div class="gc" style="left:126px;top:28px"></div><div class="gc" style="left:140px;top:28px"></div><div class="gc" style="left:154px;top:28px"></div><div class="gc" style="left:168px;top:28px"></div><div class="gc" style="left:182px;top:28px"></div><div class="gc" style="left:196px;top:28px"></div><div class="gc" style="left:210px;top:28px"></div><div class="gc" style="left:224px;top:28px"></div><div class="gc" style="left:238px;top:28px"></div><div class="gc" style="left:252px;top:28px"></div><div class="gc" style="left:266px;top:28px"></div><div class="gc" style="left:280px;top:28px"></div><div class="gc" style="left:294px;top:28px"></div><div class="gc" style="left:308px;top:28px"></div><div class="gc" style="left:0px;top:42px;background:#e2d7e6;border-color:rgba(0,0,0,.12)"></div><div class="gc" style="left:14px;top:42px;background:#7a1a80;border-color:rgba(0,0,0,.12)"></div><div class="gc" style="left:28px;top:42px;background:#ffd840;border-color:rgba(0,0,0,.12)"></div><div class="gc" style="left:42px;top:42px"></div><div class="gc" style="left:56px;top:42px"></div><div class="gc" style="left:70px;top:42px"></div><div class="gc" style="left:84px;top:42px"></div><div class="gc" style="left:98px;top:42px"></div><div class="gc" style="left:112px;top:42px"></div><div class="gc" style="left:126px;top:42px"></div><div class="gc" style="left:140px;top:42px"></div><div class="gc" style="left:154px;top:42px"></div><div class="gc" style="left:168px;top:42px"></div><div class="gc" style="left:182px;top:42px;background:#ff80f0;border-color:rgba(0,0,0,.12)"></div><div class="gc" style="left:196px;top:42px;background:#0030ff;border-color:rgba(0,0,0,.12)"></div><div class="gc" style="left:210px;top:42px"></div><div class="gc" style="left:224px;top:42px"></div><div class="gc" style="left:238px;top:42px"></div><div class="gc" style="left:252px;top:42px"></div><div class="gc" style="left:266px;top:42px"></div><div class="gc" style="left:280px;top:42px"></div><div class="gc" style="left:294px;top:42px"></div><div class="gc" style="left:308px;top:42px"></div><div class="gc" style="left:0px;top:56px;background:#e2d8e5;border-color:rgba(0,0,0,.12)"></div><div class="gc" style="left:14px;top:56px"></div><div class="gc" style="left:28px;top:56px"></div><div class="gc" style="left:42px;top:56px"></div><div class="gc" style="left:56px;top:56px"></div><div class="gc" style="left:70px;top:56px"></div><div class="gc" style="left:84px;top:56px"></div><div class="gc" style="left:98px;top:56px"></div><div class="gc" style="left:112px;top:56px"></div><div class="gc" style="left:126px;top:56px"></div><div class="gc" style="left:140px;top:56px"></div><div class="gc" style="left:154px;top:56px"></div><div class="gc" style="left:168px;top:56px"></div><div class="gc" style="left:182px;top:56px"></div><div class="gc" style="left:196px;top:56px"></div><div class="gc" style="left:210px;top:56px"></div><div class="gc" style="left:224px;top:56px"></div><div class="gc" style="left:238px;top:56px"></div><div class="gc" style="left:252px;top:56px"></div><div class="gc" style="left:266px;top:56px"></div><div class="gc" style="left:280px;top:56px"></div><div class="gc" style="left:294px;top:56px"></div><div class="gc" style="left:308px;top:56px"></div><div class="gc" style="left:0px;top:70px;background:#e2d8e5;border-color:rgba(0,0,0,.12)"></div><div class="gc" style="left:14px;top:70px"></div><div class="gc" style="left:28px;top:70px"></div><div class="gc" style="left:42px;top:70px"></div><div class="gc" style="left:56px;top:70px"></div><div class="gc" style="left:70px;top:70px"></div><div class="gc" style="left:84px;top:70px"></div><div class="gc" style="left:98px;top:70px"></div><div class="gc" style="left:112px;top:70px"></div><div class="gc" style="left:126px;top:70px"></div><div class="gc" style="left:140px;top:70px"></div><div class="gc" style="left:154px;top:70px"></div><div class="gc" style="left:168px;top:70px"></div><div class="gc" style="left:182px;top:70px"></div><div class="gc" style="left:196px;top:70px"></div><div class="gc" style="left:210px;top:70px"></div><div class="gc" style="left:224px;top:70px"></div><div class="gc" style="left:238px;top:70px"></div><div class="gc" style="left:252px;top:70px"></div><div class="gc" style="left:266px;top:70px"></div><div class="gc" style="left:280px;top:70px"></div><div class="gc" style="left:294px;top:70px"></div><div class="gc" style="left:308px;top:70px"></div><div class="gc" style="left:0px;top:84px;background:#fdeee0;border-color:rgba(0,0,0,.12)"></div><div class="gc" style="left:14px;top:84px;background:#806050;border-color:rgba(0,0,0,.12)"></div><div class="gc" style="left:28px;top:84px;background:#f6f0dd;border-color:rgba(0,0,0,.12)"></div><div class="gc" style="left:42px;top:84px"></div><div class="gc" style="left:56px;top:84px"></div><div class="gc" style="left:70px;top:84px"></div><div class="gc" style="left:84px;top:84px"></div><div class="gc" style="left:98px;top:84px"></div><div class="gc" style="left:112px;top:84px"></div><div class="gc" style="left:126px;top:84px"></div><div class="gc" style="left:140px;top:84px"></div><div class="gc" style="left:154px;top:84px"></div><div class="gc" style="left:168px;top:84px"></div><div class="gc" style="left:182px;top:84px"></div><div class="gc" style="left:196px;top:84px"></div><div class="gc" style="left:210px;top:84px"></div><div class="gc" style="left:224px;top:84px"></div><div class="gc" style="left:238px;top:84px"></div><div class="gc" style="left:252px;top:84px"></div><div class="gc" style="left:266px;top:84px"></div><div class="gc" style="left:280px;top:84px"></div><div class="gc" style="left:294px;top:84px"></div><div class="gc" style="left:308px;top:84px"></div><div class="gc" style="left:0px;top:98px;background:#f8fff8;border-color:rgba(0,0,0,.12)"></div><div class="gc" style="left:14px;top:98px;background:#284a28;border-color:rgba(0,0,0,.12)"></div><div class="gc" style="left:28px;top:98px"></div><div class="gc" style="left:42px;top:98px"></div><div class="gc" style="left:56px;top:98px"></div><div class="gc" style="left:70px;top:98px"></div><div class="gc" style="left:84px;top:98px"></div><div class="gc" style="left:98px;top:98px"></div><div class="gc" style="left:112px;top:98px"></div><div class="gc" style="left:126px;top:98px"></div><div class="gc" style="left:140px;top:98px"></div><div class="gc" style="left:154px;top:98px"></div><div class="gc" style="left:168px;top:98px"></div><div class="gc" style="left:182px;top:98px"></div><div class="gc" style="left:196px;top:98px"></div><div class="gc" style="left:210px;top:98px"></div><div class="gc" style="left:224px;top:98px"></div><div class="gc" style="left:238px;top:98px"></div><div class="gc" style="left:252px;top:98px"></div><div class="gc" style="left:266px;top:98px"></div><div class="gc" style="left:280px;top:98px"></div><div class="gc" style="left:294px;top:98px"></div><div class="gc" style="left:308px;top:98px"></div><div class="gc" style="left:0px;top:112px;background:#e0fcf4;border-color:rgba(0,0,0,.12)"></div><div class="gc" style="left:14px;top:112px;background:#c0f8ec;border-color:rgba(0,0,0,.12)"></div><div class="gc" style="left:28px;top:112px;background:#98f8e0;border-color:rgba(0,0,0,.12)"></div><div class="gc" style="left:42px;top:112px;background:#70f0d0;border-color:rgba(0,0,0,.12)"></div><div class="gc" style="left:56px;top:112px;background:#38f0b8;border-color:rgba(0,0,0,.12)"></div><div class="gc" style="left:70px;top:112px"></div><div class="gc" style="left:84px;top:112px"></div><div class="gc" style="left:98px;top:112px"></div><div class="gc" style="left:112px;top:112px"></div><div class="gc" style="left:126px;top:112px"></div><div class="gc" style="left:140px;top:112px"></div><div class="gc" style="left:154px;top:112px"></div><div class="gc" style="left:168px;top:112px"></div><div class="gc" style="left:182px;top:112px"></div><div class="gc" style="left:196px;top:112px"></div><div class="gc" style="left:210px;top:112px"></div><div class="gc" style="left:224px;top:112px"></div><div class="gc" style="left:238px;top:112px"></div><div class="gc" style="left:252px;top:112px"></div><div class="gc" style="left:266px;top:112px"></div><div class="gc" style="left:280px;top:112px"></div><div class="gc" style="left:294px;top:112px"></div><div class="gc" style="left:308px;top:112px"></div><div class="gc" style="left:0px;top:126px;background:#e6f0fc;border-color:rgba(0,0,0,.12)"></div><div class="gc" style="left:14px;top:126px;background:#e2eefc;border-color:rgba(0,0,0,.12)"></div><div class="gc" style="left:28px;top:126px;background:#dae6fc;border-color:rgba(0,0,0,.12)"></div><div class="gc" style="left:42px;top:126px;background:#c0d4fc;border-color:rgba(0,0,0,.12)"></div><div class="gc" style="left:56px;top:126px;background:#a0baf8;border-color:rgba(0,0,0,.12)"></div><div class="gc" style="left:70px;top:126px;background:#88a6f8;border-color:rgba(0,0,0,.12)"></div><div class="gc" style="left:84px;top:126px"></div><div class="gc" style="left:98px;top:126px"></div><div class="gc" style="left:112px;top:126px"></div><div class="gc" style="left:126px;top:126px;background:#e8ecf6;border-color:rgba(0,0,0,.12)"></div><div class="gc" style="left:140px;top:126px"></div><div class="gc" style="left:154px;top:126px"></div><div class="gc" style="left:168px;top:126px"></div><div class="gc" style="left:182px;top:126px"></div><div class="gc" style="left:196px;top:126px"></div><div class="gc" style="left:210px;top:126px"></div><div class="gc" style="left:224px;top:126px"></div><div class="gc" style="left:238px;top:126px"></div><div class="gc" style="left:252px;top:126px"></div><div class="gc" style="left:266px;top:126px"></div><div class="gc" style="left:280px;top:126px"></div><div class="gc" style="left:294px;top:126px"></div><div class="gc" style="left:308px;top:126px"></div></div>
  <div class="a" style="left:203px;top:630px;width:2px;height:2px;border-radius:50%;background:#bbb"></div>
</div>

</body></html>
